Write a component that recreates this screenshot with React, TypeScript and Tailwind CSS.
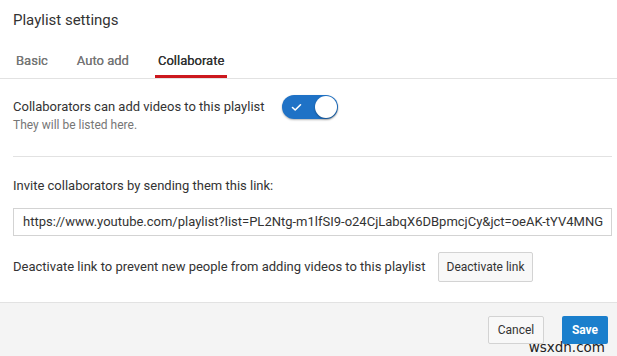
export default function App() {
  const tabs = ['Basic', 'Auto add', 'Collaborate'];
  const active = 'Collaborate';

  return (
    <div className="relative flex h-[356px] w-[617px] flex-col overflow-hidden bg-white font-['Roboto',sans-serif] text-[#333]">
      <div className="px-[13px] pt-[11px]">
        <h2 className="text-[15px] leading-[19px] text-[#333]">Playlist settings</h2>
      </div>

      <div className="mt-[19px] flex gap-[23px] border-b border-[#e2e2e2] px-[13px]">
        {tabs.map((t) => (
          <div
            key={t}
            className={
              'flex h-[29px] items-start border-b-[3px] px-[3px] pt-[4px] text-[13px] font-medium leading-[16px] ' +
              (t === active ? 'border-[#cc181e] text-[#333]' : 'border-transparent text-[#767676]')
            }
          >
            <span className="font-normal [text-shadow:0_0_0.3px_currentColor]">{t}</span>
          </div>
        ))}
      </div>

      <div className="flex flex-col px-[13px]">
        <div className="flex items-start pt-[20px]">
          <div className="w-[269px]">
            <p className="text-[13px] leading-[16px] text-[#333]">Collaborators can add videos to this playlist</p>
            <p className="mt-[3px] text-[12px] leading-[15px] text-[#767676]">They will be listed here.</p>
          </div>
          <div className="mt-[-4px] flex h-[24px] w-[56px] items-center justify-between rounded-full bg-[#1f72c6] pl-[9px] pr-[1px] shadow-[0_1px_2px_rgba(0,0,0,0.3)]">
            <svg width="11" height="9" viewBox="0 0 11 9" fill="none">
              <path d="M1.5 4.5 L4.2 7 L9.5 1.8" stroke="white" strokeWidth="1.6" strokeLinecap="round" strokeLinejoin="round" />
            </svg>
            <div className="h-[22px] w-[22px] rounded-full bg-white shadow-[0_1px_2px_rgba(0,0,0,0.35)]" />
          </div>
        </div>

        <div className="mt-[23px] h-px w-[599px] bg-[#e2e2e2]" />

        <p className="mt-[21px] text-[13px] leading-[16px] text-[#333]">Invite collaborators by sending them this link:</p>

        <div className="mt-[14px] flex h-[28px] w-[599px] items-center overflow-hidden whitespace-nowrap border border-[#d3d3d3] bg-white px-[9px] text-[13px] text-[#333]">
          https://www.youtube.com/playlist?list=PL2Ntg-m1lfSI9-o24CjLabqX6DBpmcjCy&amp;jct=oeAK-tYV4MNG
        </div>

        <div className="mt-[16px] flex items-center">
          <p className="w-[425px] text-[13px] leading-[16px] text-[#333]">
            Deactivate link to prevent new people from adding videos to this playlist
          </p>
          <button className="h-[30px] w-[95px] rounded-[2px] border border-[#d3d3d3] bg-[#f8f8f8] text-[12px] text-[#333]">
            Deactivate link
          </button>
        </div>
      </div>

      <div className="mt-auto flex h-[54px] items-center justify-end gap-[18px] border-t border-[#e2e2e2] bg-[#f4f4f4] pr-[9px]">
        <button className="h-[28px] w-[56px] rounded-[2px] border border-[#d3d3d3] bg-[#f8f8f8] text-[12px] text-[#333]">
          Cancel
        </button>
        <button className="h-[28px] w-[46px] rounded-[2px] bg-[#1b7fcc] text-[12px] font-bold text-white">
          Save
        </button>
      </div>

      <span className="absolute bottom-[2px] right-[12px] font-['DejaVu_Sans',sans-serif] text-[13.5px] leading-[14px] text-[#222]">
        wsxdn.com
      </span>
    </div>
  );
}
